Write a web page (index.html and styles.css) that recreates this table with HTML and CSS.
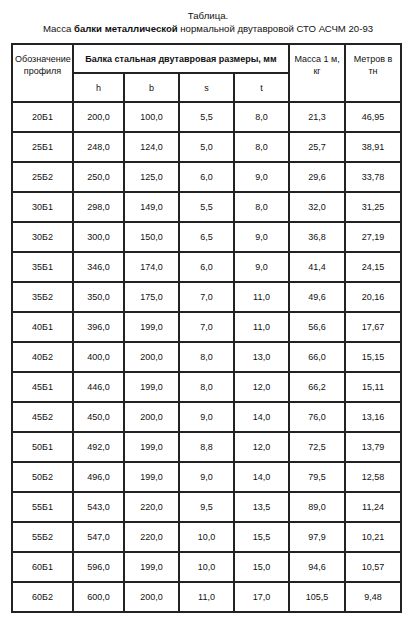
FILE: index.html
```html
<!DOCTYPE html>
<html lang="ru">
<head>
<meta charset="utf-8">
<link rel="stylesheet" href="styles.css">
</head>
<body>
<div class="caption">
  <div>Таблица.</div>
  <div>Масса <b>балки металлической</b> нормальной двутавровой СТО АСЧМ 20-93</div>
</div>
<table class="tbl">
  <colgroup>
    <col class="c1"><col class="c2"><col class="c3"><col class="c4"><col class="c5"><col class="c6"><col class="c7">
  </colgroup>
  <thead>
    <tr class="h1">
      <th rowspan="2">Обозначение профиля</th>
      <th colspan="4" class="bold">Балка стальная двутавровая размеры, мм</th>
      <th rowspan="2">Масса 1 м, кг</th>
      <th rowspan="2">Метров в тн</th>
    </tr>
    <tr class="h2">
      <th>h</th><th>b</th><th>s</th><th>t</th>
    </tr>
  </thead>
  <tbody>
    <tr><td>20Б1</td><td>200,0</td><td>100,0</td><td>5,5</td><td>8,0</td><td>21,3</td><td>46,95</td></tr>
    <tr><td>25Б1</td><td>248,0</td><td>124,0</td><td>5,0</td><td>8,0</td><td>25,7</td><td>38,91</td></tr>
    <tr><td>25Б2</td><td>250,0</td><td>125,0</td><td>6,0</td><td>9,0</td><td>29,6</td><td>33,78</td></tr>
    <tr><td>30Б1</td><td>298,0</td><td>149,0</td><td>5,5</td><td>8,0</td><td>32,0</td><td>31,25</td></tr>
    <tr><td>30Б2</td><td>300,0</td><td>150,0</td><td>6,5</td><td>9,0</td><td>36,8</td><td>27,19</td></tr>
    <tr><td>35Б1</td><td>346,0</td><td>174,0</td><td>6,0</td><td>9,0</td><td>41,4</td><td>24,15</td></tr>
    <tr><td>35Б2</td><td>350,0</td><td>175,0</td><td>7,0</td><td>11,0</td><td>49,6</td><td>20,16</td></tr>
    <tr><td>40Б1</td><td>396,0</td><td>199,0</td><td>7,0</td><td>11,0</td><td>56,6</td><td>17,67</td></tr>
    <tr><td>40Б2</td><td>400,0</td><td>200,0</td><td>8,0</td><td>13,0</td><td>66,0</td><td>15,15</td></tr>
    <tr><td>45Б1</td><td>446,0</td><td>199,0</td><td>8,0</td><td>12,0</td><td>66,2</td><td>15,11</td></tr>
    <tr><td>45Б2</td><td>450,0</td><td>200,0</td><td>9,0</td><td>14,0</td><td>76,0</td><td>13,16</td></tr>
    <tr><td>50Б1</td><td>492,0</td><td>199,0</td><td>8,8</td><td>12,0</td><td>72,5</td><td>13,79</td></tr>
    <tr><td>50Б2</td><td>496,0</td><td>199,0</td><td>9,0</td><td>14,0</td><td>79,5</td><td>12,58</td></tr>
    <tr><td>55Б1</td><td>543,0</td><td>220,0</td><td>9,5</td><td>13,5</td><td>89,0</td><td>11,24</td></tr>
    <tr><td>55Б2</td><td>547,0</td><td>220,0</td><td>10,0</td><td>15,5</td><td>97,9</td><td>10,21</td></tr>
    <tr><td>60Б1</td><td>596,0</td><td>199,0</td><td>10,0</td><td>15,0</td><td>94,6</td><td>10,57</td></tr>
    <tr><td>60Б2</td><td>600,0</td><td>200,0</td><td>11,0</td><td>17,0</td><td>105,5</td><td>9,48</td></tr>
  </tbody>
</table>
</body>
</html>
```
FILE: styles.css
```css
html, body {
  margin: 0;
  padding: 0;
  background: #fff;
}
body {
  font-family: "Liberation Sans", Arial, sans-serif;
  color: #111;
}
.caption {
  text-align: center;
  font-size: 9.6px;
  line-height: 13px;
  padding-top: 9px;
  margin-bottom: 8px;
}
.tbl {
  margin-left: 11px;
  width: 389px;
  border-collapse: collapse;
  table-layout: fixed;
  font-size: 9px;
}
.c1 { width: 61px; }
.c2 { width: 51px; }
.c3 { width: 55px; }
.c4 { width: 55px; }
.c5 { width: 55px; }
.c6 { width: 56px; }
.c7 { width: 56px; }
.tbl th, .tbl td {
  border: 2px solid #222;
  padding: 0 2px;
  text-align: center;
}
.tbl th {
  font-weight: normal;
  vertical-align: top;
  padding-top: 8px;
  line-height: 12px;
}
.tbl th.bold {
  font-weight: bold;
}
.h1 > th {
  height: 19px;
}
.h2 th {
  height: 27px;
  padding-top: 0;
  vertical-align: middle;
}
.tbl td {
  height: 28px;
  padding: 0;
  line-height: 12px;
}
```
